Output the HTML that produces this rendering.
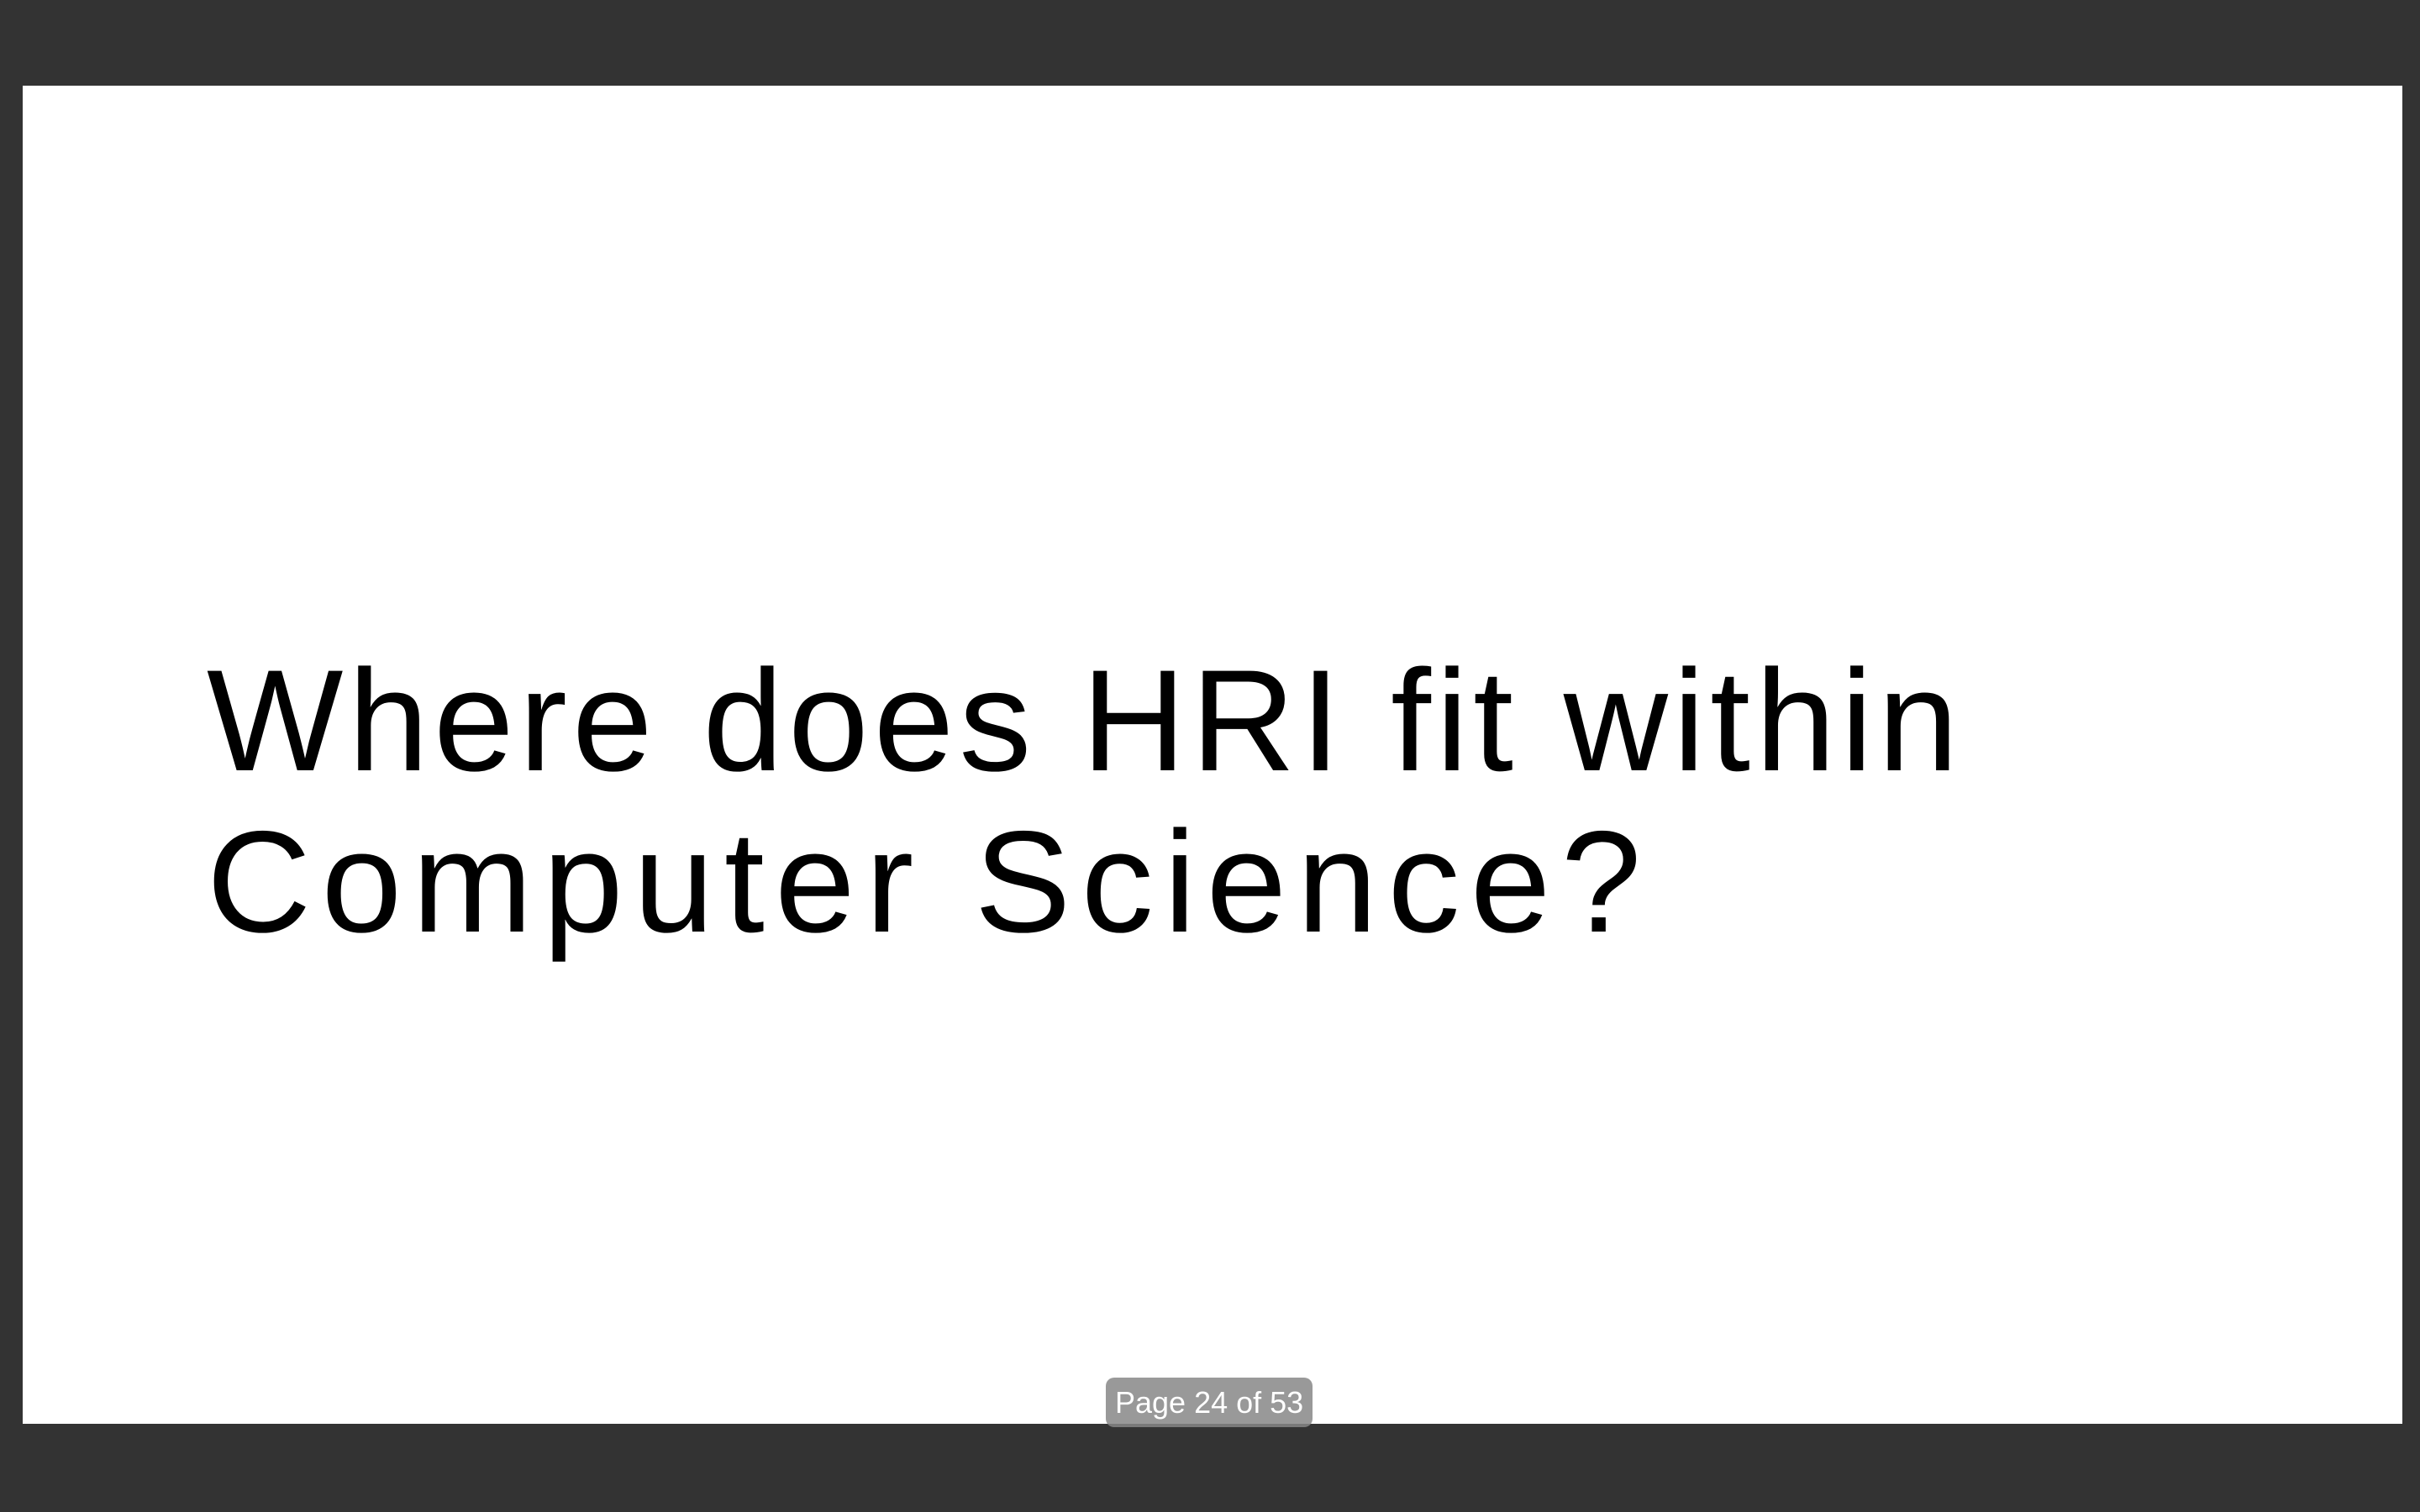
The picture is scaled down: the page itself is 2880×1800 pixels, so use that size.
<!DOCTYPE html>
<html><head><meta charset="utf-8"><style>
html,body{margin:0;padding:0;}
body{width:2880px;height:1800px;background:#333333;position:relative;overflow:hidden;font-family:"Liberation Sans",sans-serif;}
.slide{position:absolute;left:27px;top:102px;width:2832px;height:1593px;background:#fff;}
.l{position:absolute;left:246px;font-size:172px;line-height:1;color:#000;white-space:nowrap;}
.badge{position:absolute;left:1316px;top:1640px;width:246px;height:59px;border-radius:10px;background:rgba(135,135,135,0.85);color:#fff;font-size:36px;line-height:59px;box-sizing:border-box;padding-left:11px;white-space:nowrap;}
</style></head><body>
<div class="slide"></div>
<div class="l" style="top:772px;letter-spacing:6px;">Where does HRI fit within</div>
<div class="l" style="top:964px;letter-spacing:12.3px;">Computer Science?</div>
<div class="badge">Page 24 of 53</div>
</body></html>
